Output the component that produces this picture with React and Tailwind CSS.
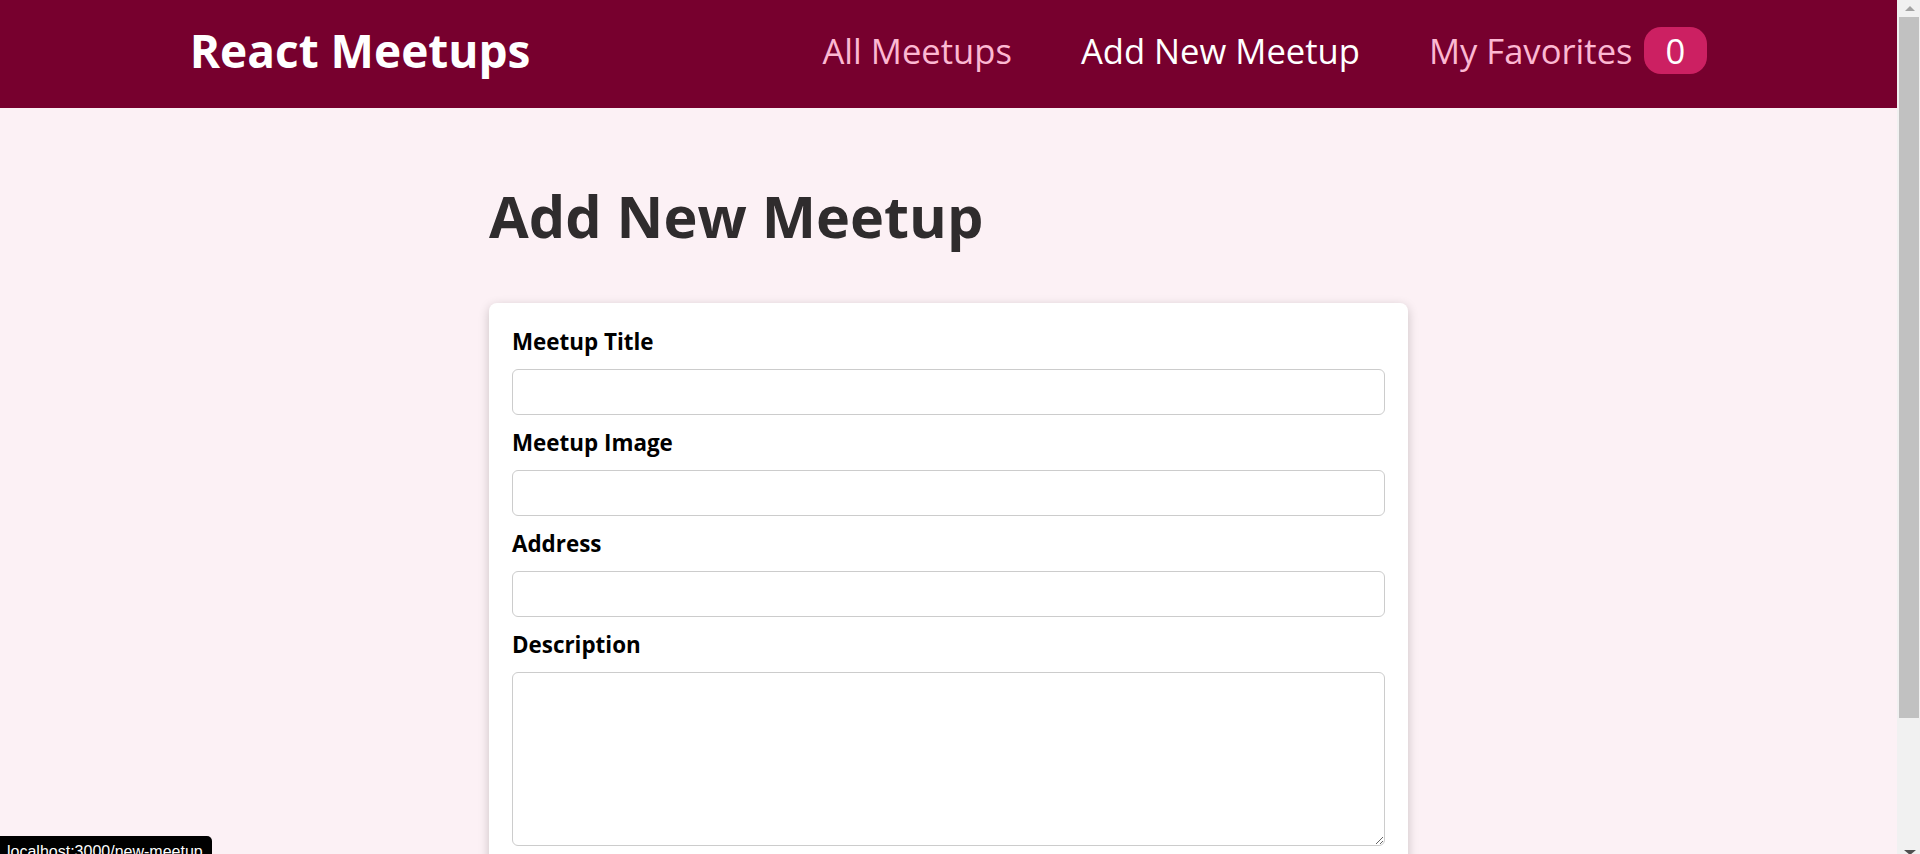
import { useState } from 'react'

const fieldLabel = 'block font-bold text-black leading-[32px] mb-[11px]'
const fieldInput = 'block w-full h-[46px] rounded-[6px] border border-[#cccccc] bg-white px-[6px] outline-none'

function Header() {
  return (
    <header className="h-[108px] shrink-0 bg-[#77002e] flex items-center justify-between px-[10%] pb-[7px]">
      <div className="text-[46px] font-bold text-white">React Meetups</div>
      <nav>
        <ul className="flex items-center gap-[69px] text-[34.6px]">
          <li><a href="#" className="text-[#fcb8d2]">All Meetups</a></li>
          <li><a href="#" className="text-white">Add New Meetup</a></li>
          <li>
            <a href="#" className="text-[#fcb8d2]">
              My Favorites
              <span className="ml-[11px] px-[22px] rounded-[17px] bg-[#cc2062] text-white">0</span>
            </a>
          </li>
        </ul>
      </nav>
    </header>
  )
}

function NewMeetupForm() {
  const [values, setValues] = useState({ title: '', image: '', address: '', description: '' })
  const set = (k) => (e) => setValues({ ...values, [k]: e.target.value })

  return (
    <div className="bg-white rounded-[8px] shadow-[0_3px_11px_rgba(0,0,0,0.2)]">
      <form className="p-[23px]" onSubmit={(e) => e.preventDefault()}>
        <div className="mb-[12px]">
          <label htmlFor="title" className={fieldLabel}>Meetup Title</label>
          <input id="title" type="text" value={values.title} onChange={set('title')} className={fieldInput} />
        </div>
        <div className="mb-[12px]">
          <label htmlFor="image" className={fieldLabel}>Meetup Image</label>
          <input id="image" type="url" value={values.image} onChange={set('image')} className={fieldInput} />
        </div>
        <div className="mb-[12px]">
          <label htmlFor="address" className={fieldLabel}>Address</label>
          <input id="address" type="text" value={values.address} onChange={set('address')} className={fieldInput} />
        </div>
        <div className="mb-[12px]">
          <label htmlFor="description" className={fieldLabel}>Description</label>
          <textarea
            id="description"
            rows="5"
            value={values.description}
            onChange={set('description')}
            className="block w-full h-[174px] rounded-[6px] border border-[#cccccc] bg-white px-[6px] outline-none"
          />
        </div>
        <div className="text-right">
          <button className="bg-[#77002e] text-white font-bold px-[34px] py-[11px] rounded-[6px] border border-[#77002e]">
            Add Meetup
          </button>
        </div>
      </form>
    </div>
  )
}

function Scrollbar() {
  return (
    <div className="w-[23px] shrink-0 bg-[#f1f1f1] flex flex-col">
      <div className="h-[17px] flex items-center justify-center pl-[2px]">
        <div className="w-0 h-0 border-l-[5px] border-r-[5px] border-b-[5px] border-l-transparent border-r-transparent border-b-[#a3a3a3]" />
      </div>
      <div className="h-[701px] ml-[2px] w-[20px] bg-[#c1c1c1]" />
      <div className="flex-1 flex items-end justify-center pl-[2px]">
        <div className="w-0 h-0 border-l-[6px] border-r-[6px] border-t-[5px] border-l-transparent border-r-transparent border-t-[#505050] mb-[-1px]" />
      </div>
    </div>
  )
}

export default function App() {
  return (
    <div className="relative h-[854px] w-full flex overflow-hidden font-['Open_Sans',sans-serif] text-[22.4px]">
      <div className="flex-1 flex flex-col bg-[#fcf1f5] min-w-0">
        <Header />
        <main className="w-[90%] max-w-[919px] mx-auto mt-[67px]">
          <h1 className="text-[57.6px] font-bold leading-[82px] text-[#2f2c2d] mb-[46px]">Add New Meetup</h1>
          <NewMeetupForm />
        </main>
      </div>
      <Scrollbar />

      {/* browser status bubble */}
      <div className="absolute left-0 bottom-0 h-[18px] w-[212px] overflow-hidden bg-black text-white rounded-tr-[5px] pl-[7px] pt-[6px] text-[16px] leading-[19px] font-['Liberation_Sans',sans-serif]">
        localhost:3000/new-meetup
      </div>
    </div>
  )
}
